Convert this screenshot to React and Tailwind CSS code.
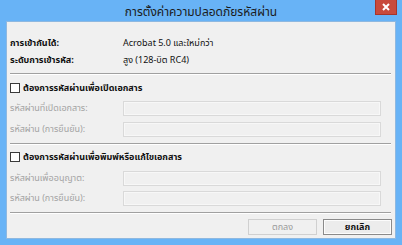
import React from "react"

const font = { fontFamily: 'Tahoma, "Noto Sans Thai", "Noto Sans", "DejaVu Sans", sans-serif' }

const Field = ({ label, gap }) => (
  <div className={`flex items-center h-[15px] ${gap}`}>
    <div className="w-[113px] text-[9px] text-[#a3a3a3] leading-none">{label}</div>
    <div className="w-[258px] h-[15px] border border-[#d9d9d9] bg-[#f0f0f0] shadow-[inset_0_0_0_1px_#f7f7f7]"></div>
  </div>
)

const Check = ({ label }) => (
  <div className="flex items-center h-[16px] gap-[3px]">
    <div className="w-[10px] h-[10px] border border-[#3a3a3a] bg-white"></div>
    <div className="text-[9px] font-bold text-[#111] leading-none">{label}</div>
  </div>
)

const Sep = () => <div className="h-[2px] border-t border-[#a0a0a0] border-b-white border-b"></div>

export default function App() {
  return (
    <div style={font} className="w-[402px] h-[245px] bg-[#68b3f6] flex flex-col overflow-hidden">
      <div className="relative h-[21px] flex items-center justify-center">
        <span className="text-[12px] text-[#1b1b1b] leading-none mt-[2px]">การตั้งค่าความปลอดภัยรหัสผ่าน</span>
        <div className="absolute right-[5px] top-0 w-[22px] h-[15px] bg-[#c84a3c] border border-[#a8342a] border-t-0 flex items-center justify-center">
          <svg width="8" height="8" viewBox="0 0 8 8">
            <path d="M1 1L7 7M7 1L1 7" stroke="white" strokeWidth="2" />
          </svg>
        </div>
      </div>
      <div className="mx-[6px] h-[218px] bg-[#f0f0f0] border border-[#8eb8e0] px-[3px] pt-[13px]">
        <div className="flex items-center h-[17px] text-[9px] leading-none">
          <div className="w-[113px] font-bold text-[#111]">การเข้ากันได้:</div>
          <div className="text-[#111]">Acrobat 5.0 และใหม่กว่า</div>
        </div>
        <div className="flex items-center h-[17px] text-[9px] leading-none">
          <div className="w-[113px] font-bold text-[#111]">ระดับการเข้ารหัส:</div>
          <div className="text-[#111]">สูง (128-บิต RC4)</div>
        </div>
        <div className="mt-[4px] mr-[1px]"><Sep /></div>
        <div className="mt-[5px]"><Check label="ต้องการรหัสผ่านเพื่อเปิดเอกสาร" /></div>
        <div className="mt-[5px]">
          <Field label="รหัสผ่านที่เปิดเอกสาร:" gap="mb-[6px]" />
          <Field label="รหัสผ่าน (การยืนยัน):" />
        </div>
        <div className="mt-[6px] mr-[1px]"><Sep /></div>
        <div className="mt-[4px]"><Check label="ต้องการรหัสผ่านเพื่อพิมพ์หรือแก้ไขเอกสาร" /></div>
        <div className="mt-[6px]">
          <Field label="รหัสผ่านเพื่ออนุญาต:" gap="mb-[5px]" />
          <Field label="รหัสผ่าน (การยืนยัน):" />
        </div>
        <div className="mt-[6px] mr-[1px]"><Sep /></div>
        <div className="mt-[5px] flex justify-end gap-[6px]">
          <div className="w-[69px] h-[16px] border border-[#d0d0d0] bg-[#f0f0f0] flex items-center justify-center text-[9px] text-[#9a9a9a] leading-none">ตกลง</div>
          <div className="w-[69px] h-[16px] border border-[#8a8a8a] bg-[#ececec] shadow-[inset_0_0_0_1px_#fcfcfc] flex items-center justify-center text-[9px] font-bold text-[#111] leading-none">ยกเลิก</div>
        </div>
      </div>
    </div>
  )
}
